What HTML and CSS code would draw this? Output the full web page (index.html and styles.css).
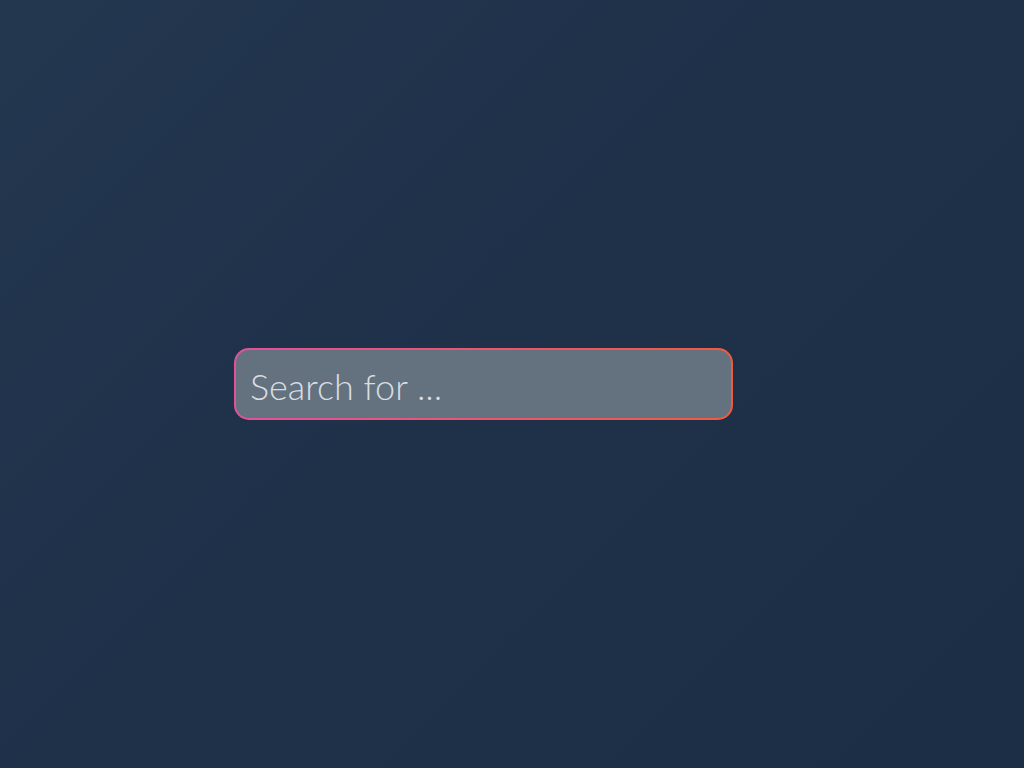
FILE: index.html
```html
<!DOCTYPE html>
<html lang="en">
<head>
<meta charset="utf-8">
<title>Search</title>
<link rel="stylesheet" href="styles.css">
</head>
<body>
<main class="page">
  <form class="search">
    <input class="search-input" type="text" placeholder="Search for ...">
  </form>
</main>
</body>
</html>
```

FILE: styles.css
```css
html, body {
  margin: 0;
  height: 100%;
}
body {
  background: linear-gradient(135deg, #23374f 0%, #1f3049 50%, #1c2e46 100%);
  font-family: "Lato", "Open Sans", sans-serif;
}
.page {
  height: 100%;
  display: flex;
  align-items: center;
  padding-left: 234px;
  box-sizing: border-box;
}
.search {
  margin: 0;
}
.search-input {
  display: block;
  width: 499px;
  height: 72px;
  box-sizing: border-box;
  border: 2px solid transparent;
  border-radius: 15px;
  background:
    linear-gradient(#64727f, #64727f) padding-box,
    linear-gradient(90deg, #e0529c 0%, #ea5670 50%, #f25a40 100%) border-box;
  padding: 4px 14px 0;
  font-family: "Lato", sans-serif;
  font-weight: 300;
  font-size: 36px;
  color: #e3e7eb;
  outline: none;
}
.search-input::placeholder {
  color: #d9dde2;
  opacity: 1;
}
```
